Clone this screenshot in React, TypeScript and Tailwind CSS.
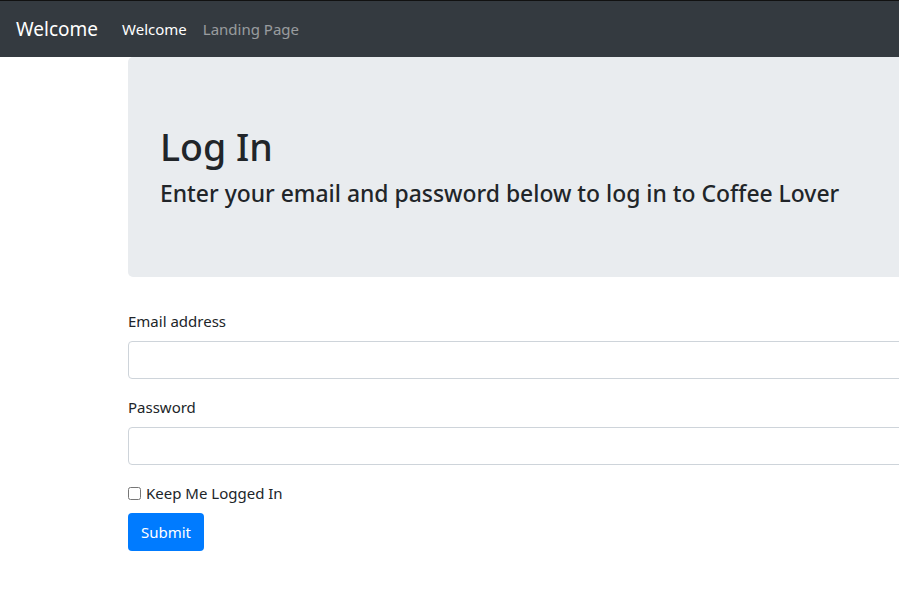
import React from "react";

const font = { fontFamily: '"Noto Sans", "Open Sans", sans-serif' };

const Navbar = () => (
  <nav className="flex h-[57px] items-center border-t border-[#111] bg-[#343a40] px-4">
    <a className="mr-4 py-[5px] text-[19px] leading-[30px] text-white">Welcome</a>
    <div className="flex">
      <a className="px-2 py-2 text-[15px] leading-6 text-white">Welcome</a>
      <a className="px-2 py-2 text-[15px] leading-6 text-white/50">Landing Page</a>
    </div>
  </nav>
);

const App = () => {
  return (
    <div className="h-[600px] w-[899px] overflow-hidden bg-white text-[#212529]" style={font}>
      <Navbar />
      <div className="ml-[128px] w-[900px]">
        <div className="mb-8 rounded-[5px] bg-[#e9ecef] px-8 pb-[61px] pt-[66px]">
          <h1 className="mb-2 text-[37.5px] font-medium leading-[48px]">Log In</h1>
          <h4 className="mb-2 text-[22.9px] font-medium leading-[29px]">
            Enter your email and password below to log in to Coffee Lover
          </h4>
        </div>
        <form onSubmit={(e) => e.preventDefault()}>
          <div className="mb-4">
            <label className="mb-2 block text-[15px] leading-6">Email address</label>
            <input
              type="email"
              className="block h-[38px] w-full rounded border border-[#ced4da] px-3 text-base"
            />
          </div>
          <div className="mb-4">
            <label className="mb-2 block text-[15px] leading-6">Password</label>
            <input
              type="password"
              className="block h-[38px] w-full rounded border border-[#ced4da] px-3 text-base"
            />
          </div>
          <div className="mb-2 flex items-center">
            <input type="checkbox" className="m-0 h-[13px] w-[13px]" />
            <label className="ml-[5px] text-[15px] leading-6">Keep Me Logged In</label>
          </div>
          <button
            type="submit"
            className="h-[38px] w-[76px] rounded bg-[#007bff] text-[15px] leading-6 text-white"
          >
            Submit
          </button>
        </form>
      </div>
    </div>
  );
};

export default App;
